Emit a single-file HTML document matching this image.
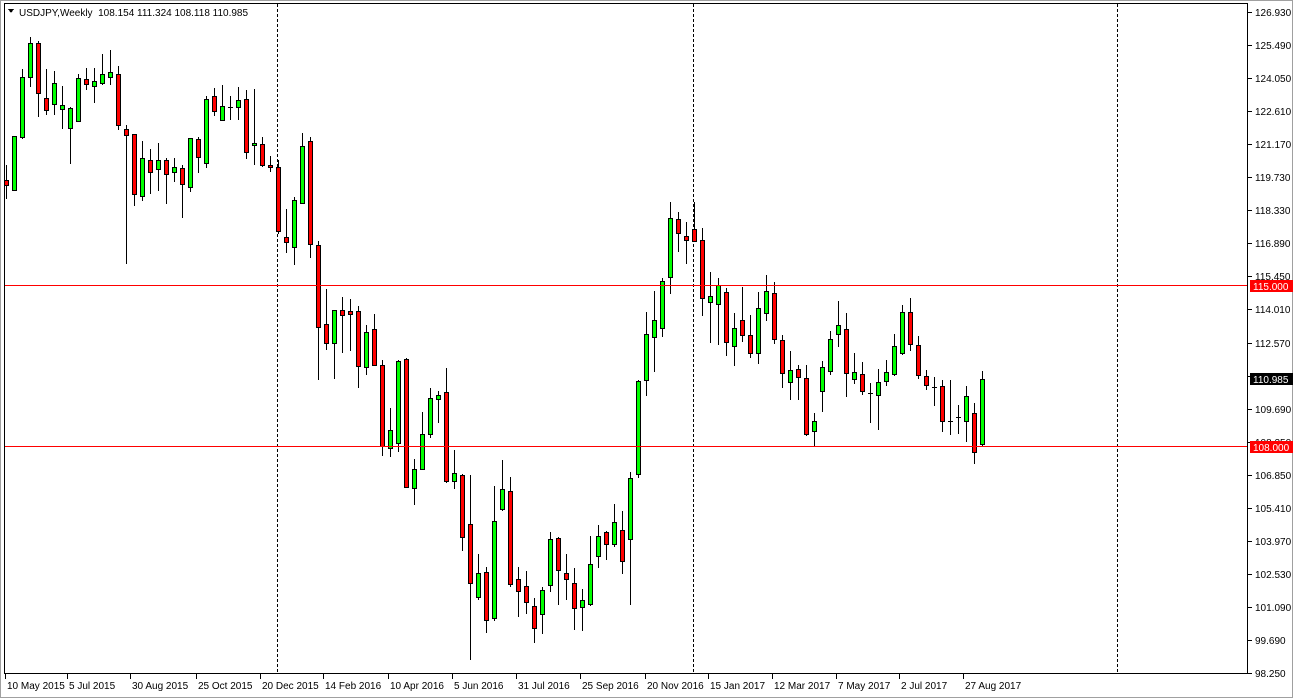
<!DOCTYPE html>
<html><head><meta charset="utf-8">
<style>
html,body{margin:0;padding:0;background:#fff;}
body{width:1293px;height:698px;overflow:hidden;position:relative;font-family:"Liberation Sans",sans-serif;}
svg{position:absolute;left:0;top:0;}
svg text{font-family:"Liberation Sans",sans-serif;font-size:10px;}
.hl{position:absolute;left:5px;width:1242px;height:1px;background:#ff0000;}
</style></head><body>
<svg id="s" width="1293" height="698" viewBox="0 0 1293 698" shape-rendering="crispEdges">
<rect x="0" y="0" width="1293" height="698" fill="#fff"/>
<rect x="0.5" y="0.5" width="1292" height="697" fill="none" stroke="#a0a0a0"/>
<rect x="4.5" y="3.5" width="1243" height="670" fill="none" stroke="#000"/>
<line x1="277.5" y1="4" x2="277.5" y2="673" stroke="#000" stroke-dasharray="3,2"/>
<line x1="693.5" y1="4" x2="693.5" y2="673" stroke="#000" stroke-dasharray="3,2"/>
<line x1="1117.5" y1="4" x2="1117.5" y2="673" stroke="#000" stroke-dasharray="3,2"/>
<g id="c"></g>
<g id="ax" fill="#000"></g>
<path d="M8 9 L14 9 L11 13 Z" fill="#000"/>
<text x="19" y="16" fill="#000">USDJPY,Weekly&#160; 108.154 111.324 108.118 110.985</text>
<rect x="1250" y="280" width="43" height="12" fill="#ff0000"/>
<text x="1253" y="290" fill="#fff">115.000</text>
<rect x="1250" y="441" width="43" height="12" fill="#ff0000"/>
<text x="1253" y="451" fill="#fff">108.000</text>
<rect x="1250" y="373" width="43" height="12" fill="#000"/>
<text x="1253" y="383" fill="#fff">110.985</text>
</svg>
<div class="hl" style="top:285px"></div>
<div class="hl" style="top:446px"></div>
<script>
var d=[
['r',180,185,165,198],['g',136,190,136,190],['g',77,137,69,138],['g',43,77,37,86],['r',43,93,41,116],
['r',98,110,69,114],['g',83,104,71,114],['g',105,109,86,128],['g',108,128,107,163],['g',78,121,74,121],
['r',79,84,68,89],['g',81,86,68,102],['g',74,83,54,84],['g',72,77,50,84],['r',74,125,66,129],
['r',129,135,125,263],['r',134,194,134,205],['g',158,196,141,200],['r',160,172,149,193],['g',160,169,143,190],
['r',160,174,158,203],['g',167,172,158,181],['r',168,184,165,217],['g',138,187,138,191],['r',139,157,137,172],
['g',99,163,96,167],['r',96,111,88,115],['g',106,120,85,120],['d',107,107,96,119],['g',100,107,87,119],
['r',99,152,90,158],['g',143,145,89,164],['r',144,165,137,166],['r',165,167,156,171],['r',167,231,160,233],
['r',237,242,209,252],['g',200,247,197,264],['g',146,203,133,203],['r',141,244,137,257],
['r',245,327,241,379],['r',324,343,289,349],['g',310,343,310,378],['r',310,315,297,352],['r',311,314,299,350],
['r',311,366,306,387],['g',332,367,325,374],['r',329,365,314,365],['r',365,446,360,455],['g',430,448,408,456],
['g',361,443,360,451],['r',359,487,358,487],['g',469,488,459,504],['g',434,469,412,469],['g',398,434,388,437],
['g',395,399,391,422],['r',392,481,368,482],['g',473,481,450,488],['r',475,537,474,550],['r',524,583,475,659],
['g',573,597,554,599],['r',572,620,567,632],['g',521,618,486,620],['g',489,509,460,510],['r',491,584,477,586],
['r',579,591,567,616],['r',586,602,571,613],['r',606,628,598,642],['g',590,614,587,633],['g',539,585,532,591],
['r',538,570,537,604],['r',573,579,554,599],['r',583,608,568,629],['g',600,607,589,630],['g',564,604,536,605],
['g',536,556,525,567],['r',532,544,531,559],['g',522,544,504,546],['r',530,561,511,573],['g',478,539,472,604],
['g',381,474,380,477],['g',334,380,312,395],['g',320,337,291,371],['g',281,328,278,336],['g',218,277,202,293],
['r',219,233,212,251],['r',236,240,222,263],['r',229,241,202,241],['r',240,298,228,315],['g',296,302,272,342],
['g',285,304,278,344],['r',292,342,288,355],['g',328,346,313,365],['r',320,335,287,341],['r',335,353,315,357],
['g',308,353,292,363],['g',291,313,275,320],['r',293,339,282,343],['r',340,373,335,387],['g',370,382,351,399],
['r',369,377,365,399],['r',378,434,365,435],['g',421,431,413,445],['g',367,391,361,411],['g',339,371,331,374],
['g',325,334,301,346],['r',329,373,313,396],['g',372,379,353,383],['r',374,391,362,394],['d',393,393,383,422],
['g',382,395,369,429],['g',372,381,360,385],['g',346,374,334,375],['g',312,353,305,354],['r',312,344,298,350],
['r',345,375,336,378],['r',376,385,370,389],['d',387,387,377,405],['r',386,421,380,431],['d',421,421,380,434],
['d',417,417,405,433],['g',396,421,386,441],['r',413,452,403,463],['g',379,444,371,445]
];
var h='';
for(var i=0;i<d.length;i++){
 var c=d[i],x=6+8*i;
 h+='<line x1="'+(x+0.5)+'" y1="'+c[3]+'" x2="'+(x+0.5)+'" y2="'+(c[4]+1)+'" stroke="#000"/>';
 if(c[0]=='d'){h+='<line x1="'+(x-2)+'" y1="'+(c[1]+0.5)+'" x2="'+(x+3)+'" y2="'+(c[1]+0.5)+'" stroke="#000"/>';}
 else{var hh=Math.max(c[2]-c[1],2);
 h+='<rect x="'+(x-1.5)+'" y="'+(c[1]+0.5)+'" width="4" height="'+hh+'" fill="'+(c[0]=='g'?'#00ff00':'#ff0000')+'" stroke="#000"/>';}
}
document.getElementById('c').innerHTML=h;
var p=['126.930','125.490','124.050','122.610','121.170','119.730','118.330','116.890','115.450','114.010','112.570','111.130','109.690','108.250','106.850','105.410','103.970','102.530','101.090','99.690','98.250'];
var a='';
for(var j=0;j<p.length;j++){var y=Math.round(12+33.05*j);
 a+='<line x1="1248" y1="'+(y+0.5)+'" x2="1252" y2="'+(y+0.5)+'" stroke="#000"/>';
 a+='<text x="1255" y="'+(y+4)+'">'+p[j]+'</text>';}
var dl=[['10 May 2015',5],['5 Jul 2015',67],['30 Aug 2015',130],['25 Oct 2015',196],['20 Dec 2015',260],['14 Feb 2016',323],['10 Apr 2016',388],['5 Jun 2016',452],['31 Jul 2016',516],['25 Sep 2016',580],['20 Nov 2016',645],['15 Jan 2017',708],['12 Mar 2017',772],['7 May 2017',836],['2 Jul 2017',899],['27 Aug 2017',963]];
for(var k=0;k<dl.length;k++){var xx=dl[k][1];
 a+='<line x1="'+(xx+0.5)+'" y1="674" x2="'+(xx+0.5)+'" y2="679" stroke="#000"/>';
 a+='<text x="'+(xx+2)+'" y="689">'+dl[k][0]+'</text>';}
document.getElementById('ax').innerHTML=a;
</script>
</body></html>
